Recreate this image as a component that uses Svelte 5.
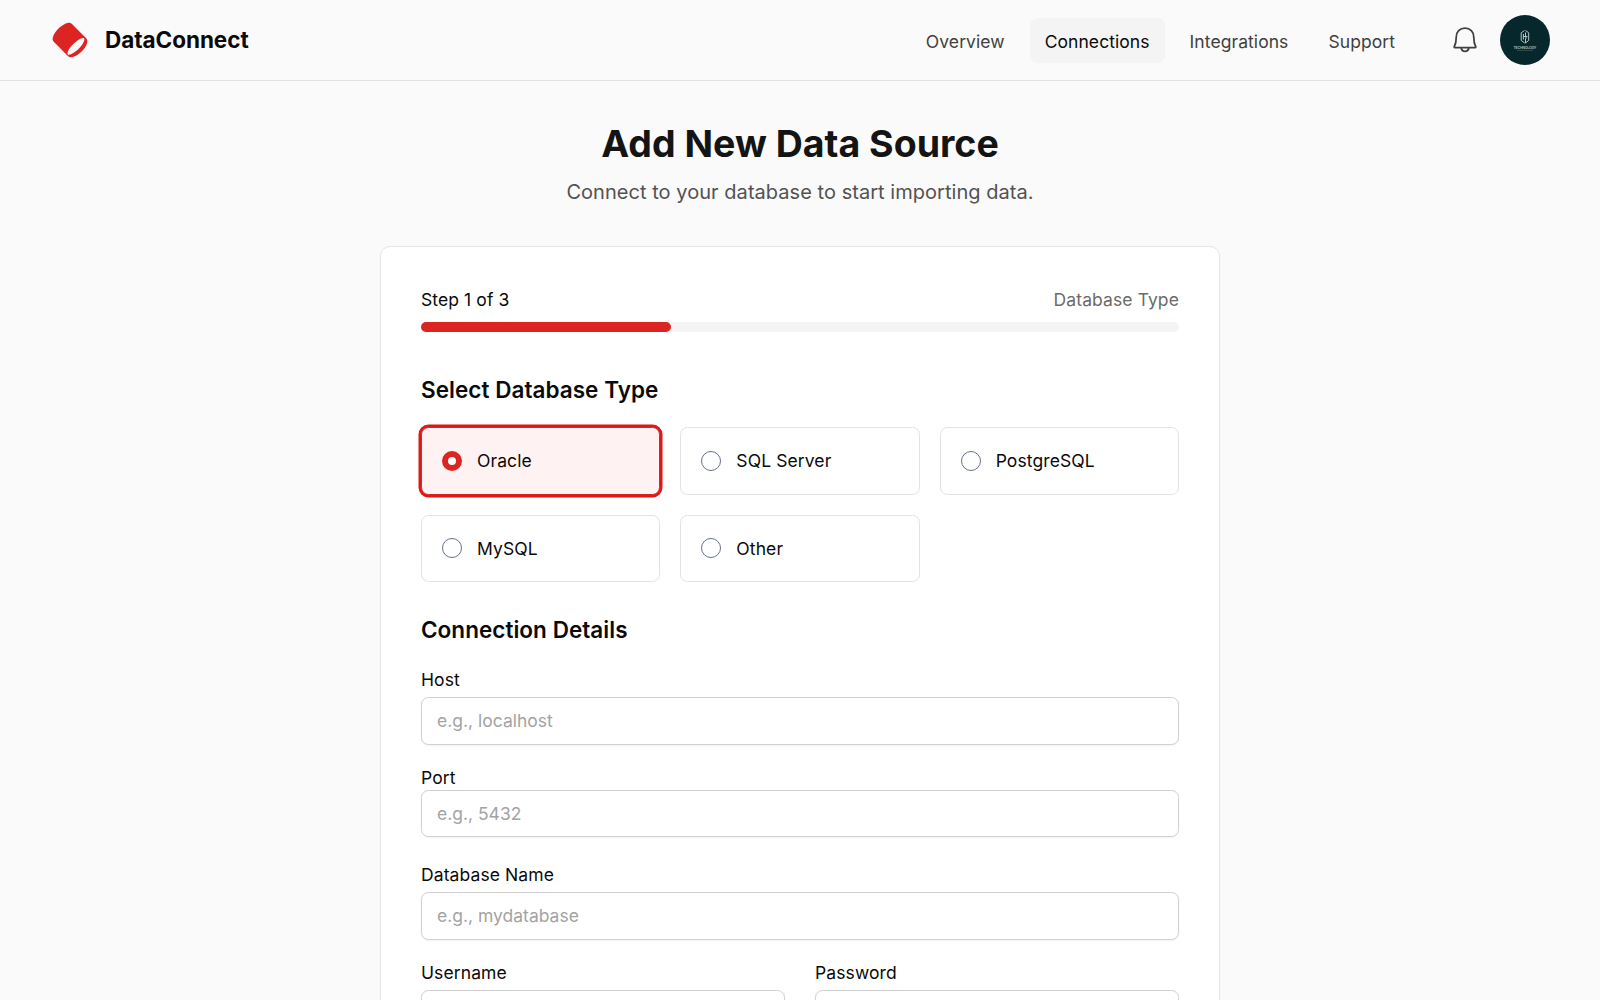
<script>
  const links = ['Overview', 'Connections', 'Integrations', 'Support'];
  const types = ['Oracle', 'SQL Server', 'PostgreSQL', 'MySQL', 'Other'];
  let active = $state('Connections');
  let selected = $state('Oracle');
  const progress = 33;
</script>

<div class="page">
  <header>
    <div class="brand">
      <svg class="logo" viewBox="0 0 40 40" aria-hidden="true">
        <path fill="#dc2423" fill-rule="evenodd" d="M15.400 3.700c2.400-1.200 4.800-1.400 6.600.4l13.900 13.900c1.700 1.700 1.900 3.400.9 5.900-2.100 5.400-7.300 10.400-12.700 12.700-2.500 1.100-4.600.9-6.200-.7L4 22.100c-1.700-1.700-1.800-3.700-.7-6.200C5.500 10.700 10.200 6.100 15.400 3.700ZM33.900 18.200c-1.600-1.400-7 2-11.300 6.500-4 4.200-6 8.400-4.600 9.700 1.500 1.300 7-1.700 11.400-6.400 4-4.200 5.900-8.500 4.500-9.800Z" />
      </svg>
      <span class="name">DataConnect</span>
    </div>
    <nav>
      {#each links as link}
        <button class="link" class:active={active === link} onclick={() => (active = link)}>{link}</button>
      {/each}
    </nav>
    <svg class="bell" viewBox="0 0 24 24" fill="none" stroke="#404040" stroke-width="1.4" stroke-linejoin="round" aria-hidden="true">
      <path d="M5 9.500C5 5.300 7.800 2.500 12 2.500S19 5.300 19 9.500C19 13 19.400 15.200 20.600 17.400C20.800 17.800 20.600 18 20.200 18H3.800C3.400 18 3.200 17.800 3.400 17.400C4.600 15.200 5 13 5 9.500ZM8.800 18c.4 2.100 1.600 3.100 3.200 3.100s2.800-1 3.200-3.100" />
    </svg>
    <svg class="avatar" viewBox="0 0 50 50" aria-hidden="true">
      <circle cx="25" cy="25" r="25" fill="#06272c" />
      <g fill="none" stroke="#b9c4c5" stroke-width="1">
        <path d="M24.500 15.500l-3.300 2.300v7.600l3.500 2.600M25.500 15.500l3.200 2.300v7.600l-3.200 2.600v-4.500l1.500-1" />
        <path d="M23.400 19v5.500M25.500 17.500v5M23.400 21.500h4" />
      </g>
      <text x="25" y="34" text-anchor="middle" textLength="23" class="mark">TECHNOLOGY</text>
      <path d="M17 35.300h16" stroke="#56696c" stroke-width=".6" />
    </svg>
  </header>

  <main>
    <h1>Add New Data Source</h1>
    <p class="sub">Connect to your database to start importing data.</p>

    <section class="card">
      <div class="steps">
        <span class="step">Step 1 of 3</span>
        <span class="stage">Database Type</span>
      </div>
      <div class="track"><div class="fill" style="width: {progress}%"></div></div>

      <h2 class="first">Select Database Type</h2>
      <div class="types">
        {#each types as type}
          <button class="type" class:selected={selected === type} onclick={() => (selected = type)}>
            <span class="radio"></span>
            <span>{type}</span>
          </button>
        {/each}
      </div>

      <h2 class="second">Connection Details</h2>
      <label class="field host"><span>Host</span><input placeholder="e.g., localhost" /></label>
      <label class="field port"><span>Port</span><input placeholder="e.g., 5432" /></label>
      <label class="field db"><span>Database Name</span><input placeholder="e.g., mydatabase" /></label>
      <div class="pair">
        <label class="field"><span>Username</span><input /></label>
        <label class="field"><span>Password</span><input type="password" /></label>
      </div>
    </section>
  </main>
</div>

<style>
  :global(body) { margin: 0; background: #fafafa; overflow: hidden; }
  .page {
    height: 1000px;
    overflow: hidden;
    background: #fafafa;
    color: #0a0a0a;
    font-family: Inter, 'Liberation Sans', sans-serif;
    font-size: 17.5px;
    line-height: 25px;
    letter-spacing: 0.1px;
  }
  button, input { font: inherit; color: inherit; letter-spacing: inherit; box-sizing: border-box; }
  header {
    display: flex;
    align-items: center;
    height: 81px;
    box-sizing: border-box;
    padding: 0 50px;
    border-bottom: 1px solid #e2e2e2;
  }
  .brand { display: flex; align-items: center; gap: 15px; }
  .logo { width: 40px; height: 40px; }
  .name { font-size: 22.5px; font-weight: 700; line-height: 30px; padding-bottom: 1px; letter-spacing: -0.04px; }
  nav { display: flex; gap: 10px; margin-left: auto; padding-top: 1px; }
  .link {
    height: 45px;
    padding: 2px 15px 0;
    border: 0;
    border-radius: 7.5px;
    background: none;
    color: #404040;
    letter-spacing: 0.07px;
  }
  .link.active { background: #f4f4f4; color: #0a0a0a; }
  .bell { width: 30px; height: 30px; margin-left: 40px; }
  .avatar { width: 50px; height: 50px; margin-left: 20px; }
  .mark { fill: #9fb0b2; font-size: 3.600px; font-weight: 700; }
  main { width: 840px; margin: 0 auto; }
  h1 {
    margin: 40px 0 0;
    font-size: 37.5px;
    line-height: 45px;
    font-weight: 700;
    text-align: center;
    letter-spacing: 0;
    color: #141414;
  }
  .sub {
    margin: 11px 0 39px;
    font-size: 20px;
    line-height: 30px;
    text-align: center;
    letter-spacing: 0.04px;
    color: #525252;
  }
  .card {
    box-sizing: border-box;
    height: 900px;
    padding: 40px;
    border: 1px solid #e5e5e5;
    border-radius: 10px;
    background: #fff;
    box-shadow: 0 1px 3px rgba(0, 0, 0, 0.02);
  }
  .steps { display: flex; justify-content: space-between; }
  .stage { color: #6b6b6b; }
  .track { height: 10px; margin-top: 10px; border-radius: 5px; background: #f4f4f4; }
  .fill { height: 10px; border-radius: 5px; background: #dc2423; }
  h2 { margin: 0; font-size: 22.5px; line-height: 35px; font-weight: 600; letter-spacing: 0.04px; }
  .first { padding: 40px 0 20px; }
  .types { display: grid; grid-template-columns: repeat(3, 1fr); gap: 20px; }
  .type {
    display: flex;
    align-items: center;
    gap: 15px;
    height: 67.5px;
    padding: 0 20px;
    border: 1px solid #e2e2e2;
    border-radius: 7.5px;
    background: #fff;
    text-align: left;
  }
  .type.selected { background: #fef2f2; border-color: #dc2423; box-shadow: 0 0 0 2.500px #dc1818; }
  .radio { box-sizing: border-box; width: 20px; height: 20px; border: 1px solid #64748b; border-radius: 50%; background: #fff; }
  .selected .radio { border: 6px solid #dc2423; }
  .second { padding: 30px 0 20px; }
  .field { display: block; }
  .field span { display: block; padding-bottom: 5px; }
  input {
    display: block;
    width: 100%;
    height: 47.5px;
    padding: 0 15px;
    border: 1px solid #d0d0d0;
    border-radius: 7.5px;
    background: #fff;
    box-shadow: 0 1px 2px rgba(0, 0, 0, 0.05);
  }
  input::placeholder { color: #a3a3a3; opacity: 1; letter-spacing: 0; }
  .host, .db { margin-bottom: 20px; }
  .port { margin-bottom: 25px; }
  .port span { padding-bottom: 0; }
  .pair { display: grid; grid-template-columns: 1fr 1fr; gap: 30px; }
</style>
